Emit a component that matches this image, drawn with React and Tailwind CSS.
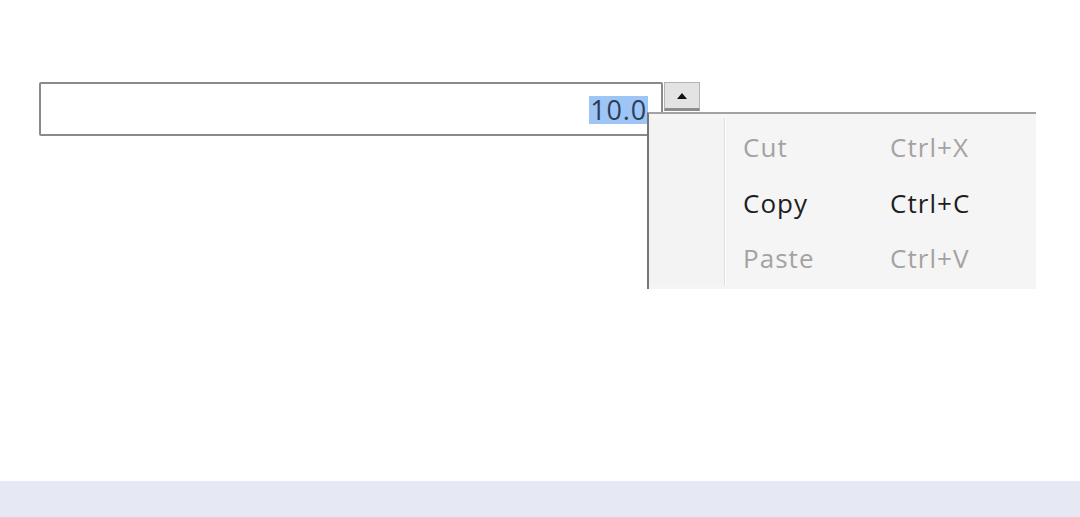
import React from "react";

const items = [
  { label: "Cut", shortcut: "Ctrl+X", enabled: false },
  { label: "Copy", shortcut: "Ctrl+C", enabled: true },
  { label: "Paste", shortcut: "Ctrl+V", enabled: false },
];

export default function App() {
  return (
    <div
      className="w-[1080px] h-[517px] bg-white flex flex-col overflow-hidden"
      style={{ fontFamily: '"Open Sans", "Noto Sans", sans-serif' }}
    >
      <div className="flex-1 pt-[82px] pl-[39px]">
        <div className="relative flex items-start">
          {/* Numeric input */}
          <div className="w-[624px] h-[54px] border-2 border-[#8a8a8a] rounded-[2px] bg-white flex justify-end items-start pr-[13px] pt-[12px]">
            <span className="bg-[#9dc6f7] text-[#2f3d58] text-[27px] leading-[28px] tracking-[0.03em] px-[1px]">10.0</span>
          </div>
          {/* Spin up button */}
          <div className="ml-[1px] w-[36px] h-[29px] bg-[#e3e3e3] border border-[#b4b4b4] border-b-[3px] border-b-[#8c8c8c] flex items-center justify-center">
            <svg width="10" height="6" viewBox="0 0 10 6">
              <path d="M0 6 L5 0 L10 6 Z" fill="#111" />
            </svg>
          </div>

          {/* Context menu */}
          <div className="absolute left-[608px] top-[30px] w-[389px] h-[177px] bg-[#f5f5f5] border-l-2 border-l-[#767676] border-t-2 border-t-[#a2a2a2] flex">
            <div className="w-[76px] bg-[#f3f3f3] border-r border-r-[#dedede] my-[4px]" />
            <div className="w-px bg-white my-[4px]" />
            <div className="flex-1 flex flex-col pt-[6px] pl-[17px]">
              {items.map((it) => (
                <div
                  key={it.label}
                  className={`h-[55.5px] flex items-center text-[26px] tracking-[0.04em] ${
                    it.enabled ? "text-[#1e1e1e]" : "text-[#a3a3a3]"
                  }`}
                >
                  <span className="w-[147px]">{it.label}</span>
                  <span>{it.shortcut}</span>
                </div>
              ))}
            </div>
          </div>
        </div>
      </div>
      <div className="h-[36px] bg-[#e6e9f3]" />
    </div>
  );
}
